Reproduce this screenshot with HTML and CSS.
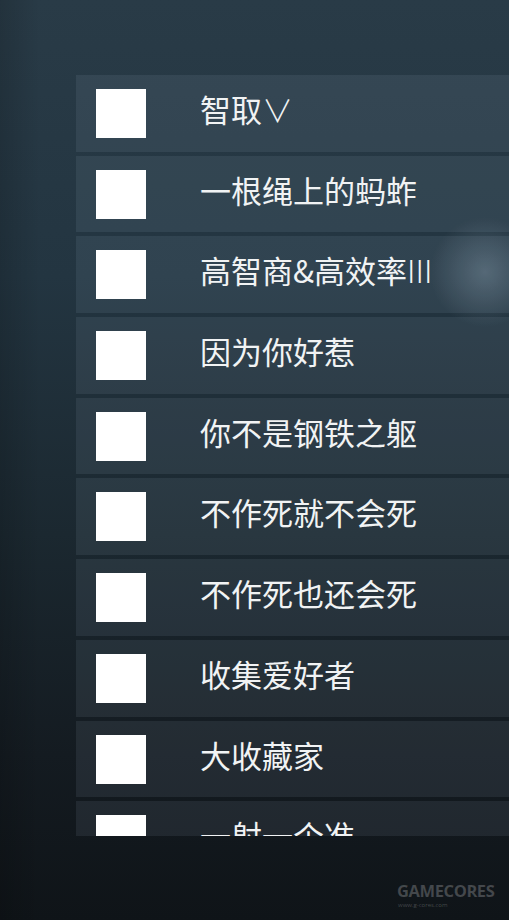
FILE: index.html
```html
<!DOCTYPE html>
<html lang="zh-CN">
<head>
<meta charset="utf-8">
<link rel="stylesheet" href="styles.css">
</head>
<body>
<div class="screen">
  <div class="list">
    <div class="row"><span class="box"></span><span class="label">智取<span class="thin">∨</span></span></div>
    <div class="row"><span class="box"></span><span class="label">一根绳上的蚂蚱</span></div>
    <div class="row"><span class="box"></span><span class="label">高智商&amp;高效率<span class="thin">III</span></span></div>
    <div class="row"><span class="box"></span><span class="label">因为你好惹</span></div>
    <div class="row"><span class="box"></span><span class="label">你不是钢铁之躯</span></div>
    <div class="row"><span class="box"></span><span class="label">不作死就不会死</span></div>
    <div class="row"><span class="box"></span><span class="label">不作死也还会死</span></div>
    <div class="row"><span class="box"></span><span class="label">收集爱好者</span></div>
    <div class="row"><span class="box"></span><span class="label">大收藏家</span></div>
    <div class="row"><span class="box"></span><span class="label">一射一个准</span></div>
  </div>
  <div class="mark">
    <div class="mark-name">GAMECORES</div>
    <div class="mark-url">www.g-cores.com</div>
  </div>
</div>
</body>
</html>
```

FILE: styles.css
```css
* { box-sizing: border-box; }
html, body { margin: 0; padding: 0; }
body {
  width: 509px;
  height: 920px;
  overflow: hidden;
  font-family: "Noto Sans CJK SC", "Noto Sans", sans-serif;
}
.screen {
  position: relative;
  width: 509px;
  height: 920px;
  overflow: hidden;
  padding: 75px 0 0 76px;
  background:
    radial-gradient(circle 55px at 485px 272px, rgba(150,172,188,0.35), rgba(150,172,188,0)),
    linear-gradient(90deg, rgba(0,0,0,0.15) 0px, rgba(0,0,0,0) 40px),
    linear-gradient(180deg, #293b47 0%, #233541 30%, #1b2830 58%, #141b21 82%, #0f1418 100%);
}
.list {
  position: relative;
  height: 761px;
  overflow: hidden;
  display: flex;
  flex-direction: column;
  gap: 4px;
}
.row {
  flex: 0 0 76.7px;
  display: flex;
  align-items: flex-start;
  padding: 14px 0 0 20px;
  background: rgba(190,215,230,0.09);
}
.box {
  width: 50px;
  height: 49px;
  background: #ffffff;
  flex: 0 0 auto;
}
.label {
  margin-left: 54px;
  font-size: 31px;
  line-height: 40px;
  color: #f1f3f4;
  white-space: nowrap;
}
.thin {
  font-weight: 300;
}
.mark {
  position: absolute;
  left: 397px;
  top: 881px;
  color: rgba(255,255,255,0.22);
  font-family: "Open Sans", "Noto Sans", sans-serif;
}
.mark-name {
  font-size: 16.5px;
  font-weight: 700;
  letter-spacing: -0.4px;
  line-height: 19px;
}
.mark-url {
  font-size: 6px;
  line-height: 7px;
  margin-top: 2px;
  margin-left: 1px;
}
```
